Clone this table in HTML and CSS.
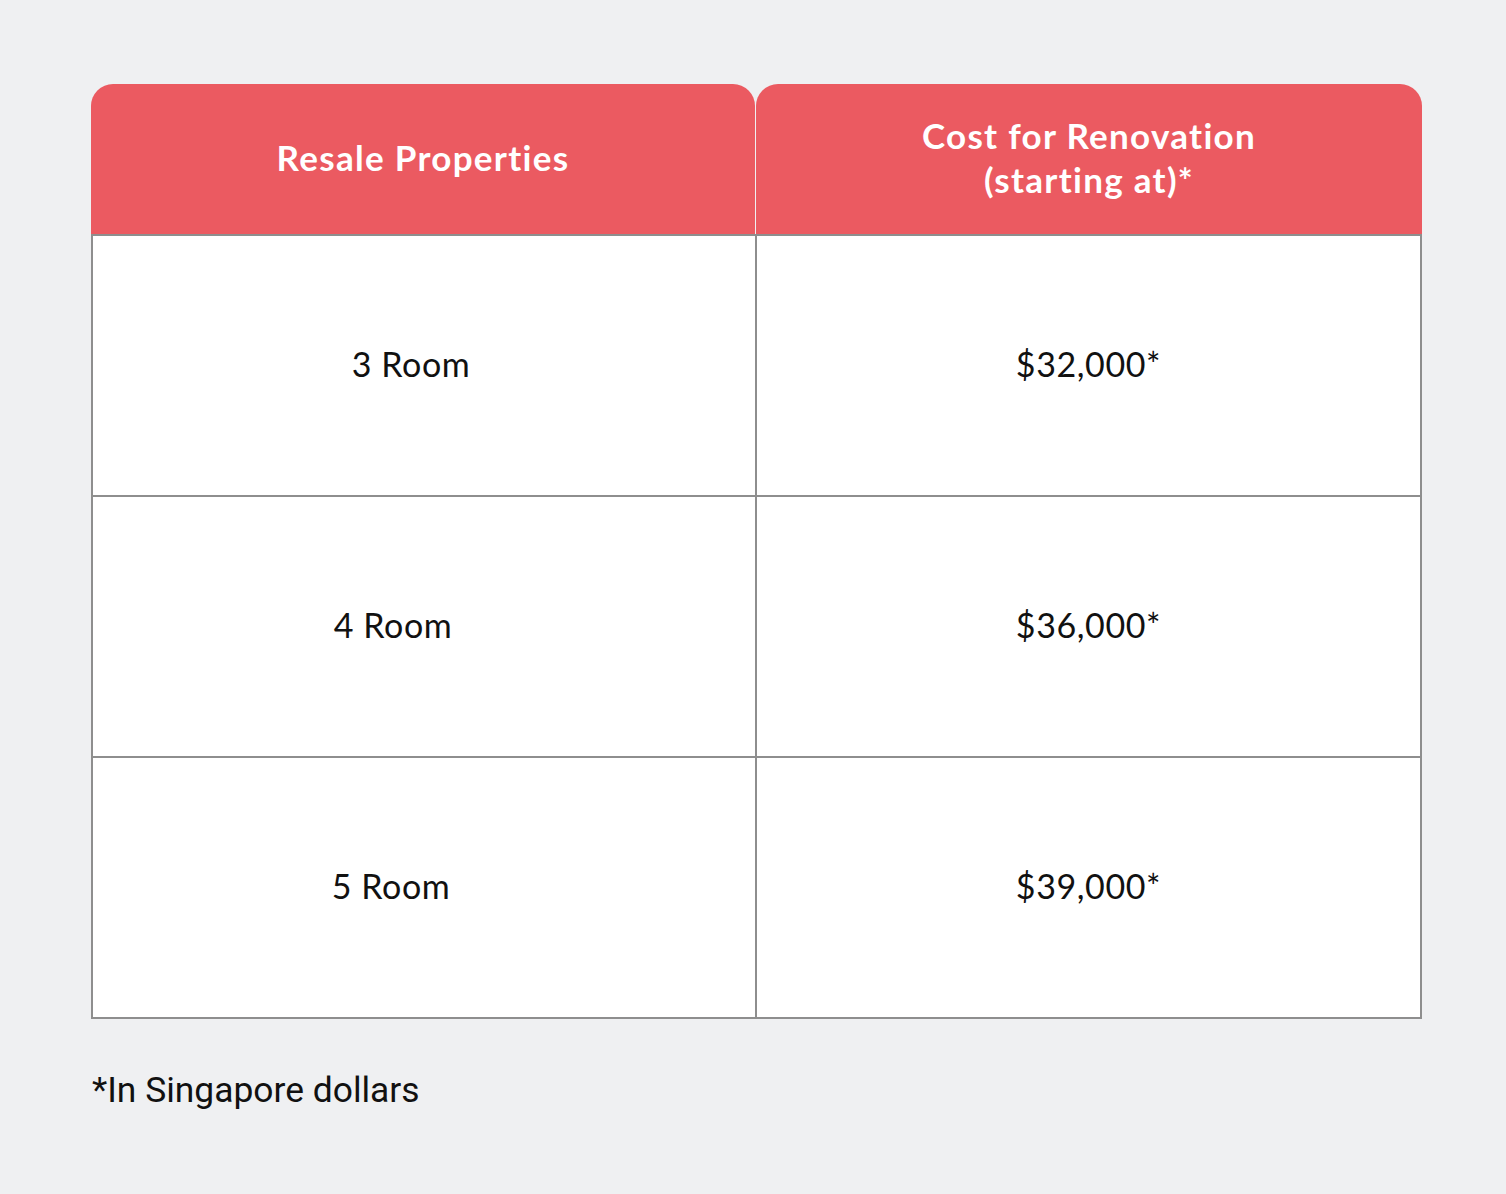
FILE: index.html
```html
<!DOCTYPE html>
<html>
<head>
<meta charset="utf-8">
<link rel="stylesheet" href="styles.css">
</head>
<body>
<div class="page">
  <div class="table">
    <div class="head">
      <div class="hcell">Resale Properties</div>
      <div class="hcell">Cost for Renovation<br>(starting at)*</div>
    </div>
    <div class="body">
      <div class="cell name r1">3 Room</div>
      <div class="cell">$32,000*</div>
      <div class="cell name r2">4 Room</div>
      <div class="cell">$36,000*</div>
      <div class="cell name r3">5 Room</div>
      <div class="cell">$39,000*</div>
    </div>
  </div>
  <p class="note">*In Singapore dollars</p>
</div>
</body>
</html>
```
FILE: styles.css
```css
html, body {
  margin: 0;
  padding: 0;
  background: #eff0f2;
}
.page {
  padding: 84px 0 0 91px;
}
.table {
  width: 1331px;
}
.head {
  display: grid;
  grid-template-columns: 664px 666px;
  gap: 1px;
  height: 150px;
}
.hcell {
  background: #eb5a61;
  border-radius: 22px 22px 0 0;
  display: flex;
  align-items: center;
  justify-content: center;
  text-align: center;
  color: #ffffff;
  font-family: Lato, "Open Sans", sans-serif;
  font-weight: 700;
  font-size: 35px;
  letter-spacing: 1.3px;
  line-height: 44px;
  padding-bottom: 4px;
  box-sizing: border-box;
}
.body {
  display: grid;
  grid-template-columns: 662px 663px;
  grid-auto-rows: 259px;
  gap: 2px;
  padding: 2px;
  background: #8e8e8e;
}
.cell {
  background: #ffffff;
  display: flex;
  align-items: center;
  justify-content: center;
  font-family: Lato, "Open Sans", sans-serif;
  font-weight: 400;
  font-size: 34px;
  letter-spacing: 0.6px;
  color: #111111;
  padding-bottom: 4px;
}
.name.r1 { padding-right: 26px; }
.name.r2 { padding-right: 62px; }
.name.r3 { padding-right: 66px; }
.note {
  margin: 52px 0 0 1px;
  font-family: Roboto, sans-serif;
  font-size: 35.4px;
  line-height: 38px;
  color: #111111;
}
```
